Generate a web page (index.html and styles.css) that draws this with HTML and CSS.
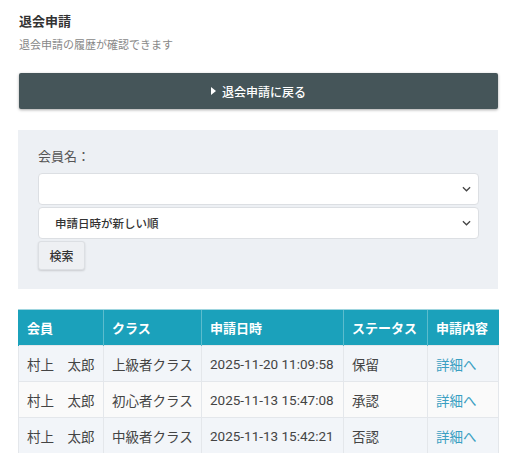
FILE: index.html
```html
<!DOCTYPE html>
<html lang="ja">
<head>
<meta charset="utf-8">
<link rel="stylesheet" href="styles.css">
</head>
<body>
<div class="page">
  <h1 class="title">退会申請</h1>
  <p class="subtitle">退会申請の履歴が確認できます</p>
  <a class="back-btn"><span class="tri"></span>退会申請に戻る</a>
  <div class="filter">
    <label class="label">会員名：</label>
    <div class="select"><span></span><svg class="chev" viewBox="0 0 10 6" width="9" height="6"><path d="M1 1l4 4 4-4" fill="none" stroke="#444" stroke-width="1.4"/></svg></div>
    <div class="select"><span class="sel-text">申請日時が新しい順</span><svg class="chev" viewBox="0 0 10 6" width="9" height="6"><path d="M1 1l4 4 4-4" fill="none" stroke="#444" stroke-width="1.4"/></svg></div>
    <button class="search">検索</button>
  </div>
  <table class="list">
    <colgroup>
      <col style="width:85px"><col style="width:98px"><col style="width:142px"><col style="width:84px"><col style="width:71px">
    </colgroup>
    <thead>
      <tr><th>会員</th><th>クラス</th><th>申請日時</th><th>ステータス</th><th>申請内容</th></tr>
    </thead>
    <tbody>
      <tr><td>村上　太郎</td><td>上級者クラス</td><td>2025-11-20 11:09:58</td><td>保留</td><td><a class="link">詳細へ</a></td></tr>
      <tr><td>村上　太郎</td><td>初心者クラス</td><td>2025-11-13 15:47:08</td><td>承認</td><td><a class="link">詳細へ</a></td></tr>
      <tr><td>村上　太郎</td><td>中級者クラス</td><td>2025-11-13 15:42:21</td><td>否認</td><td><a class="link">詳細へ</a></td></tr>
    </tbody>
  </table>
</div>
</body>
</html>
```
FILE: styles.css
```css
* { box-sizing: border-box; }
html, body { margin: 0; padding: 0; background: #fff; }
body { font-family: "Roboto", "Noto Sans CJK JP", sans-serif; color: #444; }
.page { padding: 13px 19px 0 18px; }
.title { margin: 0 0 0 1px; font-size: 13px; font-weight: 700; color: #333; line-height: 18px; }
.subtitle { margin: 8px 0 0 1px; font-size: 11px; color: #888; line-height: 14px; }
.back-btn {
  display: flex; align-items: center; justify-content: center;
  margin: 20px 0 0 1px; height: 36px;
  background: #455559; color: #fff; font-size: 12px; font-weight: 500;
  border-radius: 2px; box-shadow: 0 1px 3px rgba(0,0,0,0.35);
}
.tri { width: 0; height: 0; border-left: 5px solid #fff; border-top: 4px solid transparent; border-bottom: 4px solid transparent; margin-right: 6px; }
.filter { margin-top: 21px; background: #edf0f4; padding: 18px 19px 19px 20px; }
.label { display: block; font-size: 13px; color: #555; line-height: 18px; margin-bottom: 7px; }
.select {
  display: flex; align-items: center; justify-content: space-between;
  height: 32px; background: #fff; border: 1px solid #dcdfe3; border-radius: 4px;
  padding: 0 7px 0 16px; margin-bottom: 2px;
}
.sel-text { font-size: 11.5px; font-weight: 500; color: #333; }
.chev { display: block; }
.search {
  display: block; width: 47px; height: 29px; margin-top: 0;
  background: #eef0f3; border: 1px solid #dcdfe3; border-radius: 3px;
  box-shadow: 0 1px 2px rgba(0,0,0,0.15);
  font-family: inherit; font-size: 12px; font-weight: 500; color: #333; padding: 0;
}
.list { margin-top: 20px; width: 480px; border-collapse: collapse; table-layout: fixed; font-size: 13.5px; }
.list th {
  background: #1ba1bb; color: #fff; font-weight: 700; text-align: left; font-size: 13px;
  height: 36px; padding: 0 8px; border-left: 1px solid #5cbccd; border-top: 1px solid #9fd5df;
  white-space: nowrap;
}
.list th:first-child { border-left: 1px solid #1ba1bb; }
.list td { height: 36px; padding: 0 8px; border: 1px solid #e4e7eb; white-space: nowrap; color: #444; }
.list tbody tr:nth-child(odd) td { background: #f2f5f9; }
.list tbody tr:nth-child(even) td { background: #fafafa; }
.link { color: #3a9fc2; }
```
